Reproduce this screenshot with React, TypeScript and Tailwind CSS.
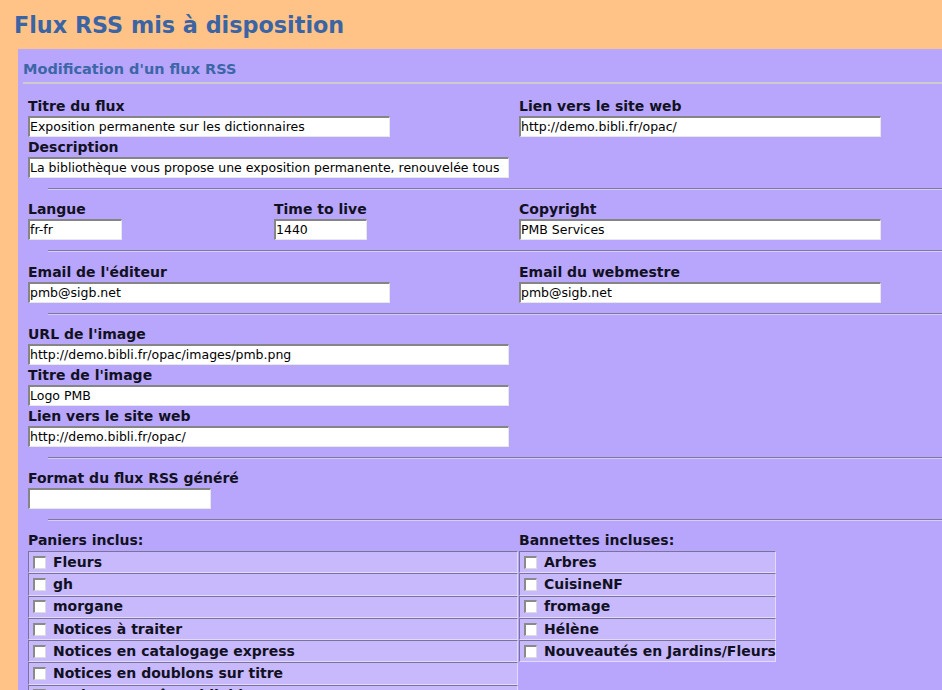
import React from "react";

const font = { fontFamily: '"DejaVu Sans", Verdana, sans-serif' };

function Label({ children }: { children: React.ReactNode }) {
  return (
    <div className="h-[20px] leading-[20px] text-[14px] font-bold text-[#111122] whitespace-nowrap">
      {children}
    </div>
  );
}

function Field({ value, w }: { value: string; w: string }) {
  return (
    <div
      className={`${w} h-[21px] bg-white border-t-2 border-l-2 border-t-[#858585] border-l-[#858585] border-b border-r border-b-[#e8e8e8] border-r-[#e8e8e8] text-[12.5px] leading-[18px] text-black whitespace-nowrap overflow-hidden`}
    >
      {value}
    </div>
  );
}

function Hr() {
  return <div className="ml-[20px] h-[2px] border-t border-t-[#7c7a9c] border-b border-b-[#d6ccff]" />;
}

function Check() {
  return (
    <span className="inline-block w-[13px] h-[13px] bg-white border-t-2 border-l-2 border-t-[#8a8a8a] border-l-[#8a8a8a] border-b border-r border-b-[#dcdcdc] border-r-[#dcdcdc] shrink-0" />
  );
}

function Row({ label }: { label: string }) {
  return (
    <div className="h-[22.3px] flex items-center gap-[7px] pl-[4px] bg-[#c8b9fd] border-t border-l border-t-[#77739a] border-l-[#77739a] border-b border-r border-b-[#e2dbff] border-r-[#e2dbff] text-[14px] font-bold text-[#111122] whitespace-nowrap">
      <Check />
      <span>{label}</span>
    </div>
  );
}

export default function App() {
  const paniers = [
    "Fleurs",
    "gh",
    "morgane",
    "Notices à traiter",
    "Notices en catalogage express",
    "Notices en doublons sur titre",
    "Notices en prêt publiable",
  ];
  const bannettes = ["Arbres", "CuisineNF", "fromage", "Hélène", "Nouveautés en Jardins/Fleurs"];

  return (
    <div className="w-[942px] h-[690px] overflow-hidden bg-[#ffc388]" style={font}>
      <div className="pl-[14px] pt-[10px] h-[49px] text-[22.3px] font-bold text-[#3a64a4] leading-[30px] whitespace-nowrap">
        Flux RSS mis à disposition
      </div>
      <div className="ml-[18px] w-[1000px] bg-[#b8a6fc] pb-[40px]">
        <div className="pl-[5px] pt-[9px]">
          <div className="h-[22px] leading-[22px] text-[14.5px] font-bold text-[#3c66a6] whitespace-nowrap">
            Modification d'un flux RSS
          </div>
          <div className="mt-[2px] h-[2px] bg-[#cccccc]" />
        </div>
        <div className="pl-[10px]">
          {/* Section 1 */}
          <div className="pt-[12px] pb-[10px] flex">
            <div className="w-[491px]">
              <Label>Titre du flux</Label>
              <Field value="Exposition permanente sur les dictionnaires" w="w-[362px]" />
              <Label>Description</Label>
              <Field value="La bibliothèque vous propose une exposition permanente, renouvelée tous" w="w-[481px]" />
            </div>
            <div>
              <Label>Lien vers le site web</Label>
              <Field value="http://demo.bibli.fr/opac/" w="w-[362px]" />
            </div>
          </div>
          <Hr />
          {/* Section 2 */}
          <div className="pt-[9px] pb-[10px] flex">
            <div className="w-[246px]">
              <Label>Langue</Label>
              <Field value="fr-fr" w="w-[94px]" />
            </div>
            <div className="w-[245px]">
              <Label>Time to live</Label>
              <Field value="1440" w="w-[93px]" />
            </div>
            <div>
              <Label>Copyright</Label>
              <Field value="PMB Services" w="w-[362px]" />
            </div>
          </div>
          <Hr />
          {/* Section 3 */}
          <div className="pt-[10px] pb-[10px] flex">
            <div className="w-[491px]">
              <Label>Email de l'éditeur</Label>
              <Field value="pmb@sigb.net" w="w-[362px]" />
            </div>
            <div>
              <Label>Email du webmestre</Label>
              <Field value="pmb@sigb.net" w="w-[362px]" />
            </div>
          </div>
          <Hr />
          {/* Section 4 */}
          <div className="pt-[9px] pb-[10px]">
            <Label>URL de l'image</Label>
            <Field value="http://demo.bibli.fr/opac/images/pmb.png" w="w-[481px]" />
            <Label>Titre de l'image</Label>
            <Field value="Logo PMB" w="w-[481px]" />
            <Label>Lien vers le site web</Label>
            <Field value="http://demo.bibli.fr/opac/" w="w-[481px]" />
          </div>
          <Hr />
          {/* Section 5 */}
          <div className="pt-[9px] pb-[10px]">
            <Label>Format du flux RSS généré</Label>
            <Field value="" w="w-[183px]" />
          </div>
          <Hr />
          {/* Section 6 */}
          <div className="pt-[9px] flex">
            <div className="w-[491px]">
              <Label>Paniers inclus:</Label>
              <div className="w-[490px] mt-[1px]">
                {paniers.map((p) => (
                  <Row key={p} label={p} />
                ))}
              </div>
            </div>
            <div>
              <Label>Bannettes incluses:</Label>
              <div className="w-[257px] mt-[1px]">
                {bannettes.map((p) => (
                  <Row key={p} label={p} />
                ))}
              </div>
            </div>
          </div>
        </div>
      </div>
    </div>
  );
}
